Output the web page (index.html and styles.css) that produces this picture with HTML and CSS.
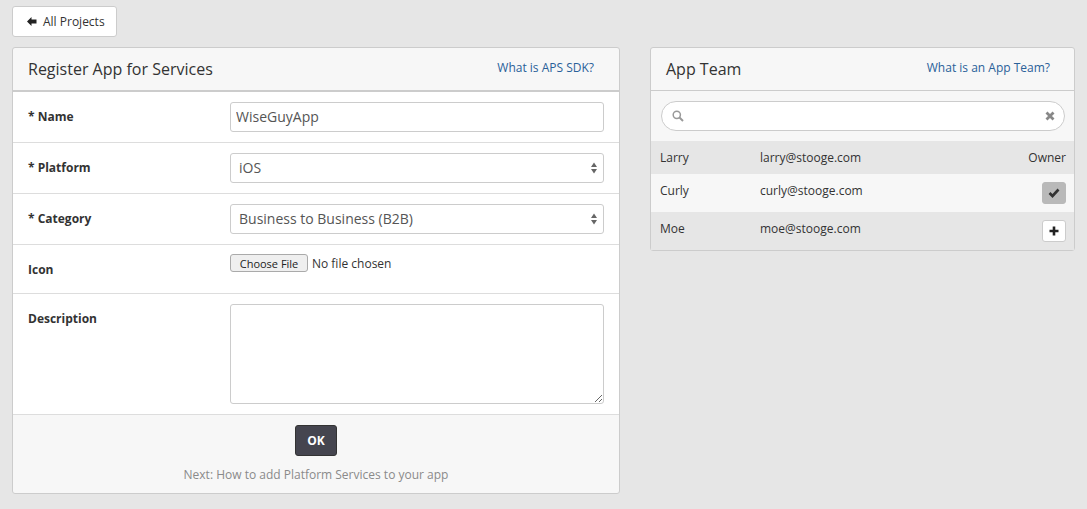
FILE: index.html
```html
<!DOCTYPE html>
<html lang="en">
<head>
    <meta charset="UTF-8">
    <meta name="viewport" content="width=device-width, initial-scale=1.0">
    <title>Register App</title>
    <link rel="stylesheet" href="styles.css">
</head>
<body>
    <a class="back-btn" href="#">
        <svg class="back-icon" width="10" height="9" viewBox="0 0 10 9"><path d="M0 4.500 4.500 0v2.500H9.500v4H4.500V9z" fill="#222"/></svg>
        All Projects
    </a>

    <div class="columns">
        <!-- Formulario -->
        <form class="panel register">
            <div class="panel-head">
                <h2>Register App for Services</h2>
                <a href="#">What is APS SDK?</a>
            </div>
            <div class="row">
                <label for="appName">* Name</label>
                <input class="field" type="text" id="appName" value="WiseGuyApp">
            </div>
            <div class="row">
                <label for="appPlatform">* Platform</label>
                <div class="select-wrap">
                    <select class="field" id="appPlatform"><option>iOS</option></select>
                    <svg class="updown" width="8" height="14" viewBox="0 0 8 14"><path d="M4 1.500 7 6H1zM4 12.500 1 8h6z" fill="#666"/></svg>
                </div>
            </div>
            <div class="row">
                <label for="appCategory">* Category</label>
                <div class="select-wrap">
                    <select class="field" id="appCategory"><option>Business to Business (B2B)</option></select>
                    <svg class="updown" width="8" height="14" viewBox="0 0 8 14"><path d="M4 1.500 7 6H1zM4 12.500 1 8h6z" fill="#666"/></svg>
                </div>
            </div>
            <div class="row row-icon">
                <label for="appIcon">Icon</label>
                <input class="file" type="file" id="appIcon">
            </div>
            <div class="row row-desc">
                <label for="appDesc">Description</label>
                <textarea class="field" id="appDesc"></textarea>
            </div>
            <div class="panel-foot">
                <button class="ok-btn" type="submit">OK</button>
                <p>Next: How to add Platform Services to your app</p>
            </div>
        </form>

        <!-- Equipo -->
        <div class="panel team">
            <div class="panel-head">
                <h2>App Team</h2>
                <a href="#">What is an App Team?</a>
            </div>
            <div class="search">
                <div class="search-box">
                    <svg width="12" height="12" viewBox="0 0 12 12"><circle cx="4.800" cy="4.800" r="3.600" fill="none" stroke="#999" stroke-width="1.500"/><path d="m7.500 7.500 3.500 3.500" stroke="#999" stroke-width="2"/></svg>
                    <input type="text" aria-label="Search">
                    <svg width="10" height="10" viewBox="0 0 10 10"><path d="m1.500 1.500 7 7m0-7-7 7" stroke="#888" stroke-width="2.800"/></svg>
                </div>
            </div>
            <div class="member member-owner">
                <span class="m-name">Larry</span>
                <span class="m-mail">larry@stooge.com</span>
                <span class="m-role">Owner</span>
            </div>
            <div class="member">
                <span class="m-name">Curly</span>
                <span class="m-mail">curly@stooge.com</span>
                <button class="tick-btn is-on" type="button" aria-label="Remove">
                    <svg width="12" height="10" viewBox="0 0 12 10"><path d="m1.500 5 3 3 6-6.500" fill="none" stroke="#333" stroke-width="2.600"/></svg>
                </button>
            </div>
            <div class="member member-alt">
                <span class="m-name">Moe</span>
                <span class="m-mail">moe@stooge.com</span>
                <button class="tick-btn" type="button" aria-label="Add">
                    <svg width="10" height="10" viewBox="0 0 10 10"><path d="M5 .5v9M.5 5h9" stroke="#222" stroke-width="2.600"/></svg>
                </button>
            </div>
        </div>
    </div>
</body>
</html>
```

FILE: styles.css
```css
* {
    box-sizing: border-box;
}

body {
    margin: 0;
    padding: 6px 12px 0 12px;
    font-family: "Open Sans", sans-serif;
    font-size: 12px;
    color: #333;
    background-color: #e6e6e6;
}

a {
    color: #2a6199;
    text-decoration: none;
}

.back-btn {
    display: inline-flex;
    align-items: center;
    gap: 6px;
    height: 31px;
    width: 105px;
    padding-left: 14px;
    color: #333;
    background-color: #fff;
    border: 1px solid #ccc;
    border-radius: 3px;
}

.columns {
    display: flex;
    align-items: flex-start;
    gap: 30px;
    margin-top: 10px;
}

.panel {
    background-color: #f7f7f7;
    border: 1px solid #ccc;
    border-radius: 3px;
}

.register {
    width: 608px;
}

.team {
    width: 426px;
}

.panel-head {
    display: flex;
    justify-content: space-between;
    height: 44px;
    padding: 10px 25px 0 15px;
    border-bottom: 2px solid #ccc;
}

.team .panel-head {
    height: 43px;
    padding-right: 24px;
    border-bottom-width: 1px;
}

.panel-head h2 {
    margin: 0;
    font-size: 16px;
    line-height: 22px;
    font-weight: 400;
    color: #333;
}

.panel-head a {
    line-height: 20px;
}

.row {
    display: flex;
    align-items: center;
    height: 51px;
    padding: 0 15px;
    background-color: #fff;
    border-bottom: 1px solid #ddd;
}

.row label {
    width: 202px;
    flex: none;
    margin-bottom: 2px;
    font-weight: 700;
}

.field {
    display: block;
    width: 374px;
    height: 30px;
    padding: 0 5px 2px 5px;
    font-family: "Open Sans", sans-serif;
    font-size: 14px;
    color: #555;
    background-color: #fff;
    border: 1px solid #ccc;
    border-radius: 3px;
}

.select-wrap {
    position: relative;
}

.select-wrap select {
    padding-left: 8px;
    appearance: none;
}

.updown {
    position: absolute;
    top: 8px;
    right: 6px;
}

.row-icon {
    align-items: flex-start;
    height: 49px;
    padding-top: 9px;
}

.row-icon label {
    padding-top: 7px;
}

.file {
    font-family: "Open Sans", sans-serif;
    font-size: 12px;
    color: #333;
}

.file::file-selector-button {
    width: 78px;
    height: 18px;
    margin-right: 4px;
    padding: 0;
    font-family: "Open Sans", sans-serif;
    font-size: 11px;
    color: #222;
    background-color: #efefef;
    border: 1px solid #aaa;
    border-radius: 3px;
}

.row-desc {
    align-items: flex-start;
    height: 121px;
    padding-top: 10px;
}

.row-desc label {
    padding-top: 6px;
}

.row-desc textarea {
    height: 100px;
}

.panel-foot {
    height: 78px;
    padding-top: 10px;
    text-align: center;
}

.ok-btn {
    display: block;
    width: 42px;
    height: 31px;
    margin: 0 auto;
    font-family: "Open Sans", sans-serif;
    font-size: 12px;
    font-weight: 700;
    color: #fff;
    background-color: #45454f;
    border: 1px solid #333;
    border-radius: 3px;
}

.panel-foot p {
    margin: 10px 0 0 0;
    color: #8a8a8a;
}

.search {
    padding: 10px 9px 10px 10px;
}

.search-box {
    display: flex;
    align-items: center;
    height: 30px;
    padding: 0 9px 0 10px;
    background-color: #fff;
    border: 1px solid #ccc;
    border-radius: 15px;
}

.search-box input {
    flex: 1;
    min-width: 0;
    border: none;
    outline: none;
}

.member {
    display: flex;
    align-items: center;
    height: 38px;
    padding: 0 8px 0 9px;
}

.member-owner {
    height: 33px;
    background-color: #e6e6e6;
}

.member-alt {
    background-color: #e6e6e6;
}

.member span {
    margin-bottom: 6px;
}

.member-owner span {
    margin-bottom: 0;
}

.m-name {
    width: 100px;
    flex: none;
}

.m-mail {
    flex: 1;
}

.tick-btn {
    display: flex;
    align-items: center;
    justify-content: center;
    width: 24px;
    height: 22px;
    padding: 0;
    background-color: #fff;
    border: 1px solid #ccc;
    border-radius: 3px;
}

.tick-btn.is-on {
    background-color: #b9b9b9;
    border-color: #b9b9b9;
}
```
